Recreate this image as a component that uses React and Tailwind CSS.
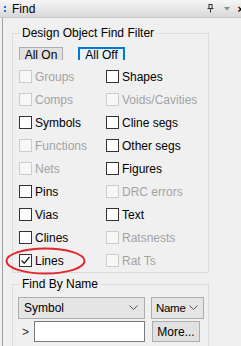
import React from "react";

const leftCol = [
  { label: "Groups", enabled: false },
  { label: "Comps", enabled: false },
  { label: "Symbols", enabled: true },
  { label: "Functions", enabled: false },
  { label: "Nets", enabled: false },
  { label: "Pins", enabled: true },
  { label: "Vias", enabled: true },
  { label: "Clines", enabled: true },
  { label: "Lines", enabled: true, checked: true },
];

const rightCol = [
  { label: "Shapes", enabled: true },
  { label: "Voids/Cavities", enabled: false },
  { label: "Cline segs", enabled: true },
  { label: "Other segs", enabled: true },
  { label: "Figures", enabled: true },
  { label: "DRC errors", enabled: false },
  { label: "Text", enabled: true },
  { label: "Ratsnests", enabled: false },
  { label: "Rat Ts", enabled: false },
];

function Check({ label, enabled, checked }) {
  return (
    <div className="flex items-center h-[23px]">
      <div
        className={`w-[13px] h-[13px] border flex items-center justify-center shrink-0 ${
          enabled ? "border-[#333333] bg-white" : "border-[#cccccc] bg-[#f7f7f7]"
        }`}
      >
        {checked && (
          <svg width="11" height="11" viewBox="0 0 11 11">
            <path d="M1.5 5.5 L4.2 8.2 L9.5 2" fill="none" stroke="#222" strokeWidth="1.3" />
          </svg>
        )}
      </div>
      <span className={`ml-[3px] ${enabled ? "text-black" : "text-[#a3a3a3]"}`}>{label}</span>
    </div>
  );
}

function Chevron() {
  return (
    <svg width="9" height="6" viewBox="0 0 9 6">
      <path d="M0.5 0.5 L4.5 4.5 L8.5 0.5" fill="none" stroke="#555" strokeWidth="1" />
    </svg>
  );
}

export default function App() {
  return (
    <div
      className="relative w-[241px] h-[346px] bg-[#f0f0f0] overflow-hidden text-[12px] leading-[14px] text-black"
      style={{ fontFamily: '"Liberation Sans", Arial, sans-serif' }}
    >
      {/* title bar */}
      <div className="h-[18px] flex items-center bg-gradient-to-b from-[#f6f6f6] to-[#d8d8d8] border-b border-[#c8c8c8]">
        <div className="ml-[4px] flex flex-col gap-[2px]">
          <span className="w-[2px] h-[2px] bg-[#1f6fd0]"></span>
          <span className="w-[2px] h-[2px] bg-[#1f6fd0]"></span>
        </div>
        <span className="ml-[6px] text-[12px]">Find</span>
        <div className="ml-auto flex items-center">
          <svg width="7" height="9" viewBox="0 0 7 9" className="mr-[10px]">
            <path d="M1.5 0.5 H5.5 M2 0.5 V4.5 H5 V0.5 M0.5 4.5 H6.5 M3.5 4.5 V8.5" fill="none" stroke="#333" strokeWidth="1" />
          </svg>
          <svg width="6" height="4" viewBox="0 0 6 4" className="mr-[8px]">
            <path d="M0 0 H6 L3 3.5 Z" fill="#8a8a8a" />
          </svg>
          <span className="text-[11px] font-bold mr-[-3px]">×</span>
        </div>
      </div>

      {/* body */}
      <div className="h-[328px] border-l border-[#a0a0a0] ml-[2px] pt-[8px]">
        <fieldset className="ml-[9px] w-[197px] border border-[#dcdcdc] pl-[6px] pr-[4px] pb-0">
          <legend className="ml-[1px] px-[2px]">Design Object Find Filter</legend>
          <div className="flex gap-[15px] mt-[7px] h-[13px] overflow-hidden">
            <button className="w-[44px] h-[16px] border border-[#adadad] bg-[#e1e1e1] leading-[14px]">All On</button>
            <button className="w-[47px] h-[16px] border-2 border-[#0078d7] bg-[#e5f1fb] leading-[12px]">All Off</button>
          </div>
          <div className="flex mt-[5px]">
            <div className="w-[87px]">
              {leftCol.map((c) => (
                <Check key={c.label} {...c} />
              ))}
            </div>
            <div>
              {rightCol.map((c) => (
                <Check key={c.label} {...c} />
              ))}
            </div>
          </div>
        </fieldset>

        <fieldset className="mt-[4px] ml-[9px] w-[197px] h-[80px] border border-[#dcdcdc] pl-[5px] pr-[4px]">
          <legend className="ml-[2px] px-[2px]">Find By Name</legend>
          <div className="flex gap-[6px] mt-[6px]">
            <div className="w-[127px] h-[22px] border border-[#acacac] bg-[#e5e5e5] flex items-center pl-[5px] pr-[6px]">
              <span>Symbol</span>
              <span className="ml-auto"><Chevron /></span>
            </div>
            <div className="w-[53px] h-[22px] border border-[#acacac] bg-[#e5e5e5] flex items-center pl-[4px] pr-[5px]">
              <span className="text-[11.5px] tracking-[-0.3px]">Name</span>
              <span className="ml-auto"><Chevron /></span>
            </div>
          </div>
          <div className="flex items-center mt-[2px]">
            <span className="w-[16px] pl-[4px] text-[#333]">&gt;</span>
            <div className="w-[111px] h-[21px] border border-[#7a7a7a] bg-white"></div>
            <button className="ml-[7px] w-[48px] h-[21px] border border-[#adadad] bg-[#e1e1e1]">More...</button>
          </div>
        </fieldset>
      </div>

      {/* red highlight ellipse */}
      <svg className="absolute left-[5px] top-[247px]" width="81" height="28" viewBox="0 0 81 28">
        <ellipse cx="40.5" cy="14" rx="39" ry="12.5" fill="none" stroke="#e3262b" strokeWidth="2" />
      </svg>
    </div>
  );
}
